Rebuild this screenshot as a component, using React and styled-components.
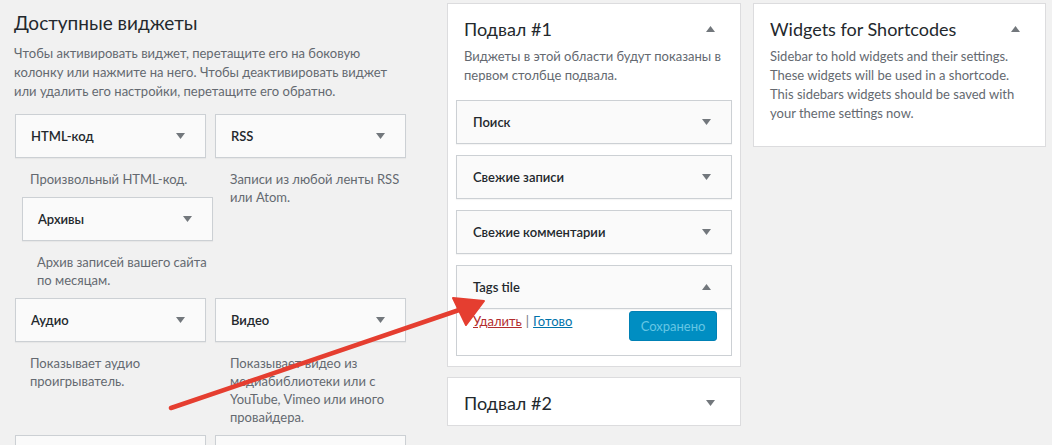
import React from "react";
import styled, { createGlobalStyle } from "styled-components";

const GlobalStyle = createGlobalStyle`
  html, body {
    margin: 0;
    padding: 0;
    background: #f1f1f1;
    font-family: Lato, "Liberation Sans", sans-serif;
    color: #23282d;
    overflow: hidden;
  }
`;

const available = [
  [
    [
      { title: "HTML-код", desc: ["Произвольный HTML-код."] },
      { title: "Архивы", desc: ["Архив записей вашего сайта", "по месяцам."], dragged: true },
    ],
    [{ title: "RSS", desc: ["Записи из любой ленты RSS", "или Atom."] }],
  ],
  [
    [{ title: "Аудио", desc: ["Показывает аудио", "проигрыватель."] }],
    [
      {
        title: "Видео",
        desc: ["Показывает видео из", "медиабиблиотеки или с", "YouTube, Vimeo или иного", "провайдера."],
      },
    ],
  ],
  [[{ title: "", desc: [] }], [{ title: "", desc: [] }]],
];

function Arrow({ up }) {
  return (
    <Tri width="9" height="6" viewBox="0 0 9 6">
      {up ? <path d="M0 6 L4.5 0 L9 6 Z" /> : <path d="M0 0 L9 0 L4.5 6 Z" />}
    </Tri>
  );
}

function WidgetItem({ item }) {
  return (
    <Item $dragged={item.dragged}>
      <WidgetTop>
        <WidgetTitle>{item.title}</WidgetTitle>
        {item.title && <Arrow />}
      </WidgetTop>
      {item.desc.length > 0 && (
        <WidgetDesc>
          {item.desc.map((l) => (
            <div key={l}>{l}</div>
          ))}
        </WidgetDesc>
      )}
    </Item>
  );
}

function App() {
  return (
    <Page>
      <GlobalStyle />
      <LeftCol>
        <Heading>Доступные виджеты</Heading>
        <Intro>
          <div>Чтобы активировать виджет, перетащите его на боковую</div>
          <div>колонку или нажмите на него. Чтобы деактивировать виджет</div>
          <div>или удалить его настройки, перетащите его обратно.</div>
        </Intro>
        <WidgetGrid>
          {available.map((row, ri) =>
            row.map((cell, ci) => (
              <Cell key={`${ri}-${ci}`}>
                {cell.map((item, ii) => (
                  <WidgetItem key={ii} item={item} />
                ))}
              </Cell>
            ))
          )}
        </WidgetGrid>
      </LeftCol>

      <MidCol>
        <Panel>
          <PanelHead>
            <PanelTitle>Подвал #1</PanelTitle>
            <Arrow up />
          </PanelHead>
          <PanelDesc>
            <div>Виджеты в этой области будут показаны в</div>
            <div>первом столбце подвала.</div>
          </PanelDesc>
          <SideList>
            {["Поиск", "Свежие записи", "Свежие комментарии"].map((t) => (
              <SideWidget key={t}>
                <WidgetTop>
                  <WidgetTitle>{t}</WidgetTitle>
                  <Arrow />
                </WidgetTop>
              </SideWidget>
            ))}
            <SideWidget>
              <WidgetTop>
                <WidgetTitle>Tags tile</WidgetTitle>
                <Arrow up />
              </WidgetTop>
              <WidgetBody>
                <Links>
                  <DeleteLink>Удалить</DeleteLink>
                  <Sep>|</Sep>
                  <DoneLink>Готово</DoneLink>
                </Links>
                <SavedButton>Сохранено</SavedButton>
              </WidgetBody>
            </SideWidget>
          </SideList>
        </Panel>
        <Panel $closed>
          <PanelHead>
            <PanelTitle>Подвал #2</PanelTitle>
            <Arrow />
          </PanelHead>
        </Panel>
      </MidCol>

      <RightCol>
        <Panel>
          <PanelHead>
            <PanelTitle>Widgets for Shortcodes</PanelTitle>
            <Arrow up />
          </PanelHead>
          <PanelDesc $last>
            <div>Sidebar to hold widgets and their settings.</div>
            <div>These widgets will be used in a shortcode.</div>
            <div>This sidebars widgets should be saved with</div>
            <div>your theme settings now.</div>
          </PanelDesc>
        </Panel>
      </RightCol>

      <Annotation width="1052" height="445" viewBox="0 0 1052 445">
        <line x1="171" y1="408" x2="462" y2="309" stroke="#e53e30" strokeWidth="4.5" strokeLinecap="round" />
        <path d="M484 301 L453 298 L466 325 Z" fill="#e53e30" stroke="#e53e30" strokeWidth="2" strokeLinejoin="round" />
      </Annotation>
    </Page>
  );
}

const Page = styled.div`
  position: relative;
  display: flex;
  align-items: flex-start;
  width: 1052px;
  height: 445px;
  padding: 3px 0 0 14px;
  box-sizing: border-box;
  white-space: nowrap;
`;

const LeftCol = styled.div`
  width: 392px;
  flex: none;
`;

const Heading = styled.h2`
  margin: 9px 0 0 0;
  font-size: 19px;
  font-weight: 400;
  line-height: 22px;
  color: #23282d;
`;

const Intro = styled.div`
  margin: 10px 0 0 0;
  font-size: 13px;
  line-height: 19px;
  color: #646970;
`;

const WidgetGrid = styled.div`
  display: grid;
  grid-template-columns: 191px 191px;
  column-gap: 9px;
  row-gap: 9px;
  margin-top: 13px;
  margin-left: 1px;
`;

const Cell = styled.div`
  display: flex;
  flex-direction: column;
  gap: 9px;
`;

const Item = styled.div`
  ${(p) => p.$dragged && "transform: translateX(7px);"}
`;

const WidgetTop = styled.div`
  display: flex;
  align-items: center;
  justify-content: space-between;
  height: 42px;
  padding: 0 20px 0 15px;
  background: #fafafa;
  border: 1px solid #ccd0d4;
  box-shadow: 0 1px 1px rgba(0, 0, 0, 0.04);
`;

const WidgetTitle = styled.span`
  font-size: 13px;
  font-weight: 600;
  color: #23282d;
`;

const Tri = styled.svg`
  flex: none;
  fill: #72777c;
`;

const WidgetDesc = styled.div`
  padding: 12px 15px 0 15px;
  font-size: 13px;
  line-height: 18px;
  color: #646970;
`;

const MidCol = styled.div`
  width: 294px;
  margin-left: 41px;
  flex: none;
  display: flex;
  flex-direction: column;
  gap: 10px;
`;

const RightCol = styled.div`
  width: 293px;
  margin-left: 12px;
  flex: none;
`;

const Panel = styled.div`
  background: #fff;
  border: 1px solid #dcdcde;
  box-sizing: border-box;
  padding: 0 0 ${(p) => (p.$closed ? "4px" : "10px")} 0;
`;

const PanelHead = styled.div`
  display: flex;
  align-items: center;
  justify-content: space-between;
  height: 43px;
  padding: 6px 25px 0 16px;
  box-sizing: border-box;
`;

const PanelTitle = styled.h3`
  margin: 0;
  font-size: 18px;
  font-weight: 400;
  color: #23282d;
`;

const PanelDesc = styled.div`
  margin: 0;
  padding: 0 16px ${(p) => (p.$last ? "13px" : "0")} 16px;
  font-size: 13px;
  line-height: 19px;
  color: #646970;
`;

const SideList = styled.div`
  display: flex;
  flex-direction: column;
  gap: 11px;
  margin: 15px 8px 0 8px;
`;

const SideWidget = styled.div`
  background: #fff;

  & > ${WidgetTop} {
    padding: 0 20px 0 16px;
  }
`;

const WidgetBody = styled.div`
  display: flex;
  justify-content: space-between;
  align-items: flex-start;
  height: 47px;
  padding: 2px 14px 0 16px;
  border: 1px solid #ccd0d4;
  border-top: none;
  box-sizing: border-box;
`;

const Links = styled.div`
  font-size: 13px;
  line-height: 18px;
  padding-top: 1px;
`;

const DeleteLink = styled.a`
  color: #b32d2e;
  text-decoration: underline;
`;

const DoneLink = styled.a`
  color: #0073aa;
  text-decoration: underline;
`;

const Sep = styled.span`
  color: #72777c;
  margin: 0 4px;
`;

const SavedButton = styled.button`
  width: 88px;
  height: 30px;
  border: 1px solid #0081b5;
  border-radius: 3px;
  background: #008ec2;
  color: #66c6e4;
  font-family: inherit;
  font-size: 13px;
  padding: 0;
`;

const Annotation = styled.svg`
  position: absolute;
  left: 0;
  top: 0;
  pointer-events: none;
`;

export default App;
